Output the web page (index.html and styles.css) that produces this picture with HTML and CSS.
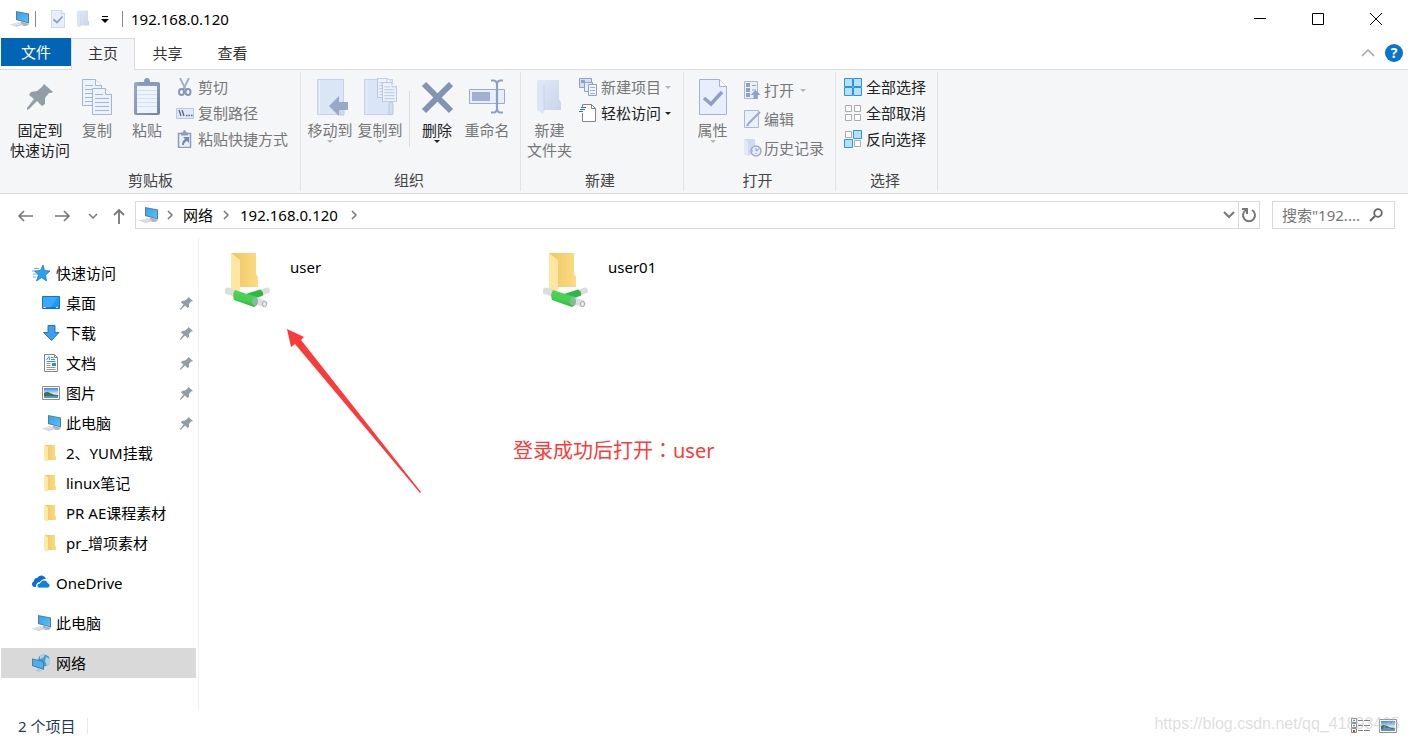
FILE: index.html
```
<!DOCTYPE html>
<html lang="zh-CN">
<head>
    <meta charset="UTF-8">
    <meta name="viewport" content="width=device-width, initial-scale=1.0">
    <title>192.168.0.120</title>
    <link rel="stylesheet" href="styles.css">
</head>
<body>

    <!-- shared icons -->
    <svg class="defs" width="0" height="0">
        <defs>
            <linearGradient id="screen" x1="0" y1="0" x2="1" y2="1">
                <stop offset="0" stop-color="#2ba4ee"/><stop offset="1" stop-color="#5cc0fa"/>
            </linearGradient>
            <linearGradient id="gold" x1="0" y1="0" x2="1" y2="0">
                <stop offset="0" stop-color="#eec661"/><stop offset="1" stop-color="#fbdc83"/>
            </linearGradient>
            <linearGradient id="pale" x1="0" y1="0" x2="1" y2="1">
                <stop offset="0" stop-color="#e0e9f6"/><stop offset="1" stop-color="#c8d5ea"/>
            </linearGradient>
            <linearGradient id="board" x1="0" y1="0" x2="1" y2="1">
                <stop offset="0" stop-color="#9cabc8"/><stop offset="1" stop-color="#7184a8"/>
            </linearGradient>
            <linearGradient id="green" x1="0.300" y1="0" x2="0" y2="1">
                <stop offset="0" stop-color="#4fd553"/><stop offset="0.500" stop-color="#45cf52"/><stop offset="1" stop-color="#1f9b37"/>
            </linearGradient>
            <linearGradient id="sky" x1="0" y1="0" x2="0" y2="1">
                <stop offset="0" stop-color="#3f86d8"/><stop offset="0.6" stop-color="#e4f1fa"/><stop offset="1" stop-color="#bcd9ee"/>
            </linearGradient>
        </defs>
        <symbol id="i-pc" viewBox="0 0 20 18">
            <path d="M6 1l13 2.500v10L6 10z" fill="#5f7a8c"/>
            <path d="M7 2l11 2.200v8L7 9.200z" fill="url(#screen)"/>
            <path d="M11 11.500l5 1.400 3 1.100-2 1.800-3 .2-4-1.500z" fill="#a9b4bd"/>
            <path d="M0 14.500 8 12.300l6 2.200L6.500 17z" fill="#c9ced3"/>
            <path d="M2 14.600l6-1.500M4.500 15.500l6-1.700" stroke="#f7f7f7" stroke-width=".7"/>
        </symbol>
        <symbol id="i-pin" viewBox="0 0 26 26">
            <path d="M17 0l9 8-2 1-2 0-4 5 0 6-3 2-5-5-8 8-2 1 0-2 7-9-5-4 2-3 6-1 5-4z" fill="#929ea5"/>
        </symbol>
        <symbol id="i-folder" viewBox="0 0 12 18">
            <path d="M1 1h10v10.500l1 1V16H3z" fill="url(#gold)"/>
            <path d="M0 1l4 2v13l-1 2-3-2z" fill="#ffe9a9"/>
        </symbol>
        <symbol id="i-share" viewBox="0 0 46 56">
            <path d="M6 1h25v21l2 3v10H14z" fill="url(#gold)"/>
            <path d="M6 1l9 7v30l-2 2-7-3z" fill="#ffe7a3"/>
            <path d="M42 38.500l-7 2.500" stroke="#dcdede" stroke-width="6" stroke-linecap="round" fill="none"/>
            <path d="M3 39l9 3" stroke="#dcdede" stroke-width="7" stroke-linecap="round" fill="none"/>
            <path d="M21 42l14-4.500q4 2 3 6l-12 5z" fill="#2db845"/>
            <path d="M10 38l12 4 10 3q2 4 0 8l-3 2-20-7q-2-6 1-10z" fill="url(#green)"/>
            <path d="M32 49l7 2.500" stroke="#dddfdf" stroke-width="7" stroke-linecap="round" fill="none"/>
            <ellipse cx="30" cy="49.500" rx="3" ry="4" fill="#8ab7a0"/>
            <ellipse cx="39.500" cy="52" rx="2" ry="2.700" fill="#ececec" stroke="#a9acad"/>
        </symbol>
        <symbol id="i-check" viewBox="0 0 28 36">
            <path d="M.5.5h20l7 7v28H.5z" fill="#e6effb" stroke="#a3b3d1"/>
            <path d="M20.500.5v7h7" fill="#f6f9fd" stroke="#a3b3d1"/>
            <path d="M5 19l7 6 11-12" fill="none" stroke="#8e9fc2" stroke-width="3.500"/>
        </symbol>
        <symbol id="i-flat" viewBox="0 0 24 36">
            <path d="M1 1h21v19l2 3v8H6z" fill="url(#pale)"/>
            <path d="M0 1l7 5v26l-1 3-6-4z" fill="#dae5f5"/>
            <path d="M7 6v26" stroke="#c3d0e5" stroke-width=".7"/>
        </symbol>
        <symbol id="i-page" viewBox="0 0 20 27">
            <path d="M.5.5h13l6 6v20H.5z" fill="#edf3fc" stroke="#a3b6d8"/>
            <path d="M13.500.5v6h6" fill="#fff" stroke="#a3b6d8"/>
            <path d="M3 6.500h8M3 10.500h14M3 14.500h14M3 18.500h14M3 22.500h14" stroke="#a3b6d8"/>
        </symbol>
        <symbol id="i-right" viewBox="0 0 8 10">
            <path d="M2 1l4 4-4 4" fill="none" stroke="#777" stroke-width="1.500"/>
        </symbol>
        <symbol id="i-drop" viewBox="0 0 6 3">
            <path d="M0 0h6L3 3z" fill="currentColor"/>
        </symbol>
        <symbol id="i-photo" viewBox="0 0 18 14">
            <path d="M.5.5h17v13H.5z" fill="#fff" stroke="#8a8f94"/>
            <path d="M2 2h14v10H2z" fill="url(#sky)"/>
            <path d="M2 7q3-2 6 0t8 2v1H2z" fill="#3c6e62"/>
            <path d="M2 10h14v2H2z" fill="#5c95b4"/>
        </symbol>
    </svg>

    <header class="titlebar">
        <svg class="app-icon" width="20" height="18"><use href="#i-pc"/></svg>
        <span class="bar"></span>
        <button class="quick" aria-label="属性"><svg width="14" height="18"><use href="#i-check"/></svg></button>
        <button class="quick" aria-label="新建文件夹"><svg width="12" height="18"><use href="#i-flat"/></svg></button>
        <button class="quick more" aria-label="自定义快速访问工具栏">
            <svg width="8" height="7"><path d="M1 .5h6" stroke="#000"/><path d="M0 3h8L4 7z"/></svg>
        </button>
        <span class="bar"></span>
        <h1>192.168.0.120</h1>
        <div class="window-buttons">
            <button aria-label="最小化"><svg width="12" height="12"><path d="M0 5.500h12" stroke="#000"/></svg></button>
            <button aria-label="最大化"><svg width="12" height="12"><path d="M.5.5h11v11H.5z" fill="none" stroke="#000"/></svg></button>
            <button aria-label="关闭"><svg width="12" height="12"><path d="M0 0l12 12M12 0L0 12" stroke="#000"/></svg></button>
        </div>
    </header>

    <nav class="tabs">
        <button class="tab file">文件</button>
        <button class="tab active">主页</button>
        <button class="tab">共享</button>
        <button class="tab">查看</button>
        <button class="collapse" aria-label="折叠功能区"><svg width="14" height="8"><path d="M1 7l6-6 6 6" fill="none" stroke="#a5a5a5" stroke-width="1.500"/></svg></button>
        <button class="help" aria-label="帮助">?</button>
    </nav>

    <section class="ribbon">
        <div class="group clipboard">
            <div class="tools">
                <button class="big pin">
                    <svg width="30" height="40"><use href="#i-pin" x="2" y="6" width="26" height="26"/></svg>
                    固定到<br>快速访问
                </button>
                <button class="big off">
                    <svg width="32" height="40"><use href="#i-page" x="1" y="1" width="20" height="27"/><use href="#i-page" x="11" y="10" width="20" height="27"/></svg>
                    复制
                </button>
                <button class="big off">
                    <svg width="26" height="40">
                        <rect y="4" width="26" height="33" rx="2" fill="url(#board)"/>
                        <path d="M3 8h20v27H3z" fill="#eef4fc"/>
                        <path d="M3 12.500h20M3 16.500h20M3 20.500h20M3 24.500h20M3 28.500h20" stroke="#d3dff0"/>
                        <path d="M5 4h5q0-4 3-4t3 4h5v3H5z" fill="#8799ba"/>
                    </svg>
                    粘贴
                </button>
                <div class="list">
                    <button class="small off">
                        <svg width="18" height="18"><path d="M4 0l6 12M13 0L7 12" stroke="#a3adc0" stroke-width="1.800"/><g fill="none" stroke="#8597b9" stroke-width="2"><ellipse cx="5.500" cy="14" rx="2.500" ry="3"/><ellipse cx="12" cy="14" rx="2.500" ry="3"/></g></svg>
                        剪切
                    </button>
                    <button class="small off">
                        <svg width="18" height="18"><path d="M.5 4.500h17v10H.5z" fill="#dfe9f7" stroke="#b9c7df"/><path d="M3 6l2 6M6 6l2 6M10 11.500h1.500M12.500 11.500H14M15 11.500h1.500" stroke="#51658f" stroke-width="1.300"/></svg>
                        复制路径
                    </button>
                    <button class="small off">
                        <svg width="18" height="18"><path d="M2.500 3.500h12v14h-12z" fill="#e8f0fb" stroke="#8b9cbd" stroke-width="1.500"/><path d="M5 2.500h2Q7 0 8.500 0T10 2.500h2v3H5z" fill="#8b9cbd"/><path d="M7 7h6v6l-2-2q-3 1-3 4H6q0-4 3-6z" fill="#7588ae"/></svg>
                        粘贴快捷方式
                    </button>
                </div>
            </div>
            <h2>剪贴板</h2>
        </div>

        <div class="group organize">
            <div class="tools">
                <button class="big off">
                    <svg width="36" height="40">
                        <path d="M5.500 1.500h26v35h-26z" fill="#dae5f5" stroke="#c5d3e9"/>
                        <path d="M7.500 2v34" stroke="#e8eff9"/>
                        <path d="M29 26q3-5 3 1v10h-4V25z" fill="#d3dff0" stroke="#b8c8e0"/>
                        <path d="M17 28l10-10v6h9v8h-9v6z" fill="#98a9c8"/>
                    </svg>
                    移动到
                    <svg class="drop" width="6" height="3"><use href="#i-drop"/></svg>
                </button>
                <button class="big off">
                    <svg width="34" height="40">
                        <path d="M1.500 1.500h28v35h-28z" fill="#dae5f5" stroke="#c5d3e9"/>
                        <path d="M3.500 2v34" stroke="#e8eff9"/>
                        <path d="M26 26q2-5 4 0v10l-4 1z" fill="#d3dff0" stroke="#b8c8e0"/>
                        <use href="#i-page" x="14" y="0" width="15" height="20"/><use href="#i-page" x="19" y="4" width="15" height="20"/>
                    </svg>
                    复制到
                    <svg class="drop" width="6" height="3"><use href="#i-drop"/></svg>
                </button>
                <span class="split"></span>
                <button class="big">
                    <svg width="32" height="40"><path d="M3 6l27 27M30 6L3 33" stroke="#8293b3" stroke-width="6"/></svg>
                    删除
                    <svg class="drop" width="6" height="3"><use href="#i-drop"/></svg>
                </button>
                <button class="big off">
                    <svg width="36" height="40">
                        <path d="M.5 11.500h35v14H.5z" fill="#e6effb" stroke="#9aabcb"/>
                        <path d="M3 14h18v9H3z" fill="#a0b0ce"/>
                        <path d="M22 2.500h3q2 0 3 3 1-3 3-3h3M28 5v26M22 34.500h3q2 0 3-3 1 3 3 3h3" fill="none" stroke="#8da0c2" stroke-width="2.200"/>
                    </svg>
                    重命名
                </button>
            </div>
            <h2>组织</h2>
        </div>

        <div class="group create">
            <div class="tools">
                <button class="big off">
                    <svg width="26" height="40"><use href="#i-flat" x="0" y="1" width="24" height="36"/></svg>
                    新建<br>文件夹
                </button>
                <div class="list">
                    <button class="small off">
                        <svg width="18" height="18"><path d="M.5.5h12v9H.5z" fill="#d4e0f2" stroke="#8ea1c4"/><path d="M2 2h4v3H2z" fill="#8ea1c4"/><path d="M5.500 4.500h8v9h-8z" fill="#e6eefa" stroke="#8ea1c4"/><path d="M9.500 6.500h8v11h-8z" fill="#f3f7fd" stroke="#8ea1c4"/><path d="M11 9.500h5M11 12.500h5M11 15.500h5" stroke="#9fb0d0"/></svg>
                        新建项目
                        <svg class="drop" width="6" height="3"><use href="#i-drop"/></svg>
                    </button>
                    <button class="small">
                        <svg width="18" height="18"><path d="M3.500 3V.5h9l4 4v13h-13V9" fill="#fff" stroke="#858585"/><path d="M12.500.5v4h4" fill="none" stroke="#858585"/><path d="M2 3.500h5M1 5.500h5M0 7.500h4" stroke="#2277b8"/></svg>
                        轻松访问
                        <svg class="drop" width="6" height="3"><use href="#i-drop"/></svg>
                    </button>
                </div>
            </div>
            <h2>新建</h2>
        </div>

        <div class="group open">
            <div class="tools">
                <button class="big off">
                    <svg width="28" height="40"><use href="#i-check" y="1" width="28" height="36"/></svg>
                    属性
                    <svg class="drop" width="6" height="3"><use href="#i-drop"/></svg>
                </button>
                <div class="list loose">
                    <button class="small off">
                        <svg width="18" height="18"><path d="M.5.5h13v17H.5z" fill="#e8f0fb" stroke="#aab9d4"/><path d="M2 2h4v4H2zM2 7h4v4H2zM2 12h4v4H2z" fill="#8ea1c4"/><path d="M8 4.500h4M8 9h4" stroke="#8ea1c4"/><path d="M11.500 9l5 5h-3v4h-4v-4h-3z" fill="#8ea1c4"/></svg>
                        打开
                        <svg class="drop" width="6" height="3"><use href="#i-drop"/></svg>
                    </button>
                    <button class="small off">
                        <svg width="18" height="18"><path d="M.5.5h14v17H.5z" fill="#e8f0fb" stroke="#aab9d4"/><path d="M16 2L5 13l-2 3" fill="none" stroke="#9aabca" stroke-width="2"/></svg>
                        编辑
                    </button>
                    <button class="small off">
                        <svg width="18" height="18"><path d="M0 0h11v13l-7 4-4-2z" fill="#d0dcee"/><path d="M0 0l4 3v14l-4-2z" fill="#e1eaf7"/><circle cx="12" cy="12" r="5" fill="#e4edf9" stroke="#9dadc9" stroke-width="1.500"/><path d="M12 9v3l3-2M8 12h1M12 14v1" fill="none" stroke="#8799ba"/></svg>
                        历史记录
                    </button>
                </div>
            </div>
            <h2>打开</h2>
        </div>

        <div class="group choose">
            <div class="tools">
                <div class="list">
                    <button class="small">
                        <svg width="18" height="18"><g fill="#b7e0fc" stroke="#2b94e5"><path d="M.5.5h8v8h-8zM9.500.5h8v8h-8zM.5 9.500h8v8h-8zM9.500 9.500h8v8h-8z"/></g></svg>
                        全部选择
                    </button>
                    <button class="small">
                        <svg width="18" height="18"><g fill="#fff" stroke="#ababab"><path d="M1.500 1.500h6v6h-6zM10.500 1.500h6v6h-6zM1.500 10.500h6v6h-6zM10.500 10.500h6v6h-6z"/></g></svg>
                        全部取消
                    </button>
                    <button class="small">
                        <svg width="18" height="18"><path d="M1.500 1.500h6v6h-6zM10.500 10.500h6v6h-6z" fill="#fff" stroke="#ababab"/><path d="M9.500.5h8v8h-8zM.5 9.500h8v8h-8z" fill="#b7e0fc" stroke="#2b94e5"/></svg>
                        反向选择
                    </button>
                </div>
            </div>
            <h2>选择</h2>
        </div>
    </section>

    <div class="address-row">
        <button class="nav" aria-label="后退"><svg width="16" height="12"><path d="M16 6H2M7 1L2 6l5 5" fill="none" stroke="#777" stroke-width="1.600"/></svg></button>
        <button class="nav" aria-label="前进"><svg width="16" height="12"><path d="M0 6h14M9 1l5 5-5 5" fill="none" stroke="#777" stroke-width="1.600"/></svg></button>
        <button class="nav narrow" aria-label="最近浏览的位置"><svg width="10" height="8"><path d="M1 2l4 4 4-4" fill="none" stroke="#777" stroke-width="1.500"/></svg></button>
        <button class="nav narrow" aria-label="上移"><svg width="12" height="16"><path d="M6 16V2M1 7l5-5 5 5" fill="none" stroke="#777" stroke-width="1.800"/></svg></button>
        <div class="address">
            <svg width="20" height="18"><use href="#i-pc"/></svg>
            <svg class="sep" width="8" height="10"><use href="#i-right"/></svg>
            <a href="#">网络</a>
            <svg class="sep" width="8" height="10"><use href="#i-right"/></svg>
            <a href="#">192.168.0.120</a>
            <svg class="sep last" width="8" height="10"><use href="#i-right"/></svg>
            <button class="history" aria-label="以前的位置"><svg width="12" height="8"><path d="M1 1l5 5 5-5" fill="none" stroke="#777" stroke-width="2"/></svg></button>
            <button class="refresh" aria-label="刷新"><svg width="16" height="16"><path d="M11 3a6 6 0 1 1-6 0" fill="none" stroke="#777" stroke-width="2"/><path d="M1 1h6v6H5V3H1z" fill="#777"/></svg></button>
        </div>
        <label class="search">
            <input type="text" placeholder="搜索&quot;192...." aria-label="搜索">
            <svg width="14" height="14"><circle cx="9" cy="5" r="3.800" fill="none" stroke="#666" stroke-width="1.800"/><path d="M6 8l-5 5" stroke="#666" stroke-width="2"/></svg>
        </label>
    </div>

    <main>
        <aside class="sidebar">
            <a href="#" class="root">
                <svg width="18" height="18"><path d="M11 1l1.500 5.500 5.500.5-4.500 4 1 6-5-3.500L4.500 17l2-6-4-4 6-.5z" fill="#2ba0ee" stroke="#1b78c2" stroke-width=".8"/><path d="M2 4.500h5M0 7h3M1 10h4M1 13h3" stroke="#64b7ee"/></svg>
                快速访问
            </a>
            <a href="#">
                <svg width="18" height="18"><path d="M.5 2.500h17v12H.5z" fill="#1c9bf5" stroke="#1676bd"/><path d="M16 3L8 14H1V3z" fill="#37aafa"/><path d="M1 14h16" stroke="#0b5e9f"/><path d="M1.500 13.500h2M14 13.500h2" stroke="#fff"/></svg>
                桌面
                <svg class="tack" width="13" height="13"><use href="#i-pin"/></svg>
            </a>
            <a href="#">
                <svg width="18" height="18"><path d="M6 1.500h7v7h4L9.500 16.500 1.500 8.500H6z" fill="#3f9df0" stroke="#2376c4"/></svg>
                下载
                <svg class="tack" width="13" height="13"><use href="#i-pin"/></svg>
            </a>
            <a href="#">
                <svg width="18" height="18"><path d="M2.500.5h10l3 3v14h-13z" fill="#fff" stroke="#7e8589"/><path d="M12.500.5v3h3" fill="none" stroke="#7e8589"/><path d="M4.500 6L7 2.500 7.500 6M9 3.500h2.500M9 5.500h4M4.500 7.500h9" fill="none" stroke="#279ada"/><path d="M4.500 9.500h4M4.500 11.500h4M4.500 13.500h9M4.500 15.500h9" stroke="#8f979b"/><path d="M10 9h4v3h-4z" fill="#3589c4"/></svg>
                文档
                <svg class="tack" width="13" height="13"><use href="#i-pin"/></svg>
            </a>
            <a href="#">
                <svg width="18" height="18"><use href="#i-photo" y="2" width="18" height="14"/></svg>
                图片
                <svg class="tack" width="13" height="13"><use href="#i-pin"/></svg>
            </a>
            <a href="#">
                <svg class="wide" width="20" height="18"><use href="#i-pc"/></svg>
                此电脑
                <svg class="tack" width="13" height="13"><use href="#i-pin"/></svg>
            </a>
            <a href="#"><svg width="18" height="18"><use href="#i-folder" x="2" width="12" height="18"/></svg>2、YUM挂载</a>
            <a href="#"><svg width="18" height="18"><use href="#i-folder" x="2" width="12" height="18"/></svg>linux笔记</a>
            <a href="#"><svg width="18" height="18"><use href="#i-folder" x="2" width="12" height="18"/></svg>PR AE课程素材</a>
            <a href="#"><svg width="18" height="18"><use href="#i-folder" x="2" width="12" height="18"/></svg>pr_增项素材</a>
            <a href="#" class="root gap">
                <svg width="18" height="18"><path d="M3 13q-3 0-3-3 0-2 2-3 0-3 3-3 2-3 5-2.500 3 .5 4 3.500l-2 0q-3 1-4 3-4 0-4 5z" fill="#0a6fd0"/><path d="M7 14q-2 0-2-2.500T8 9q1-3 4-3t4 3q2 .5 2 2.500T16 14z" fill="#1180e0" stroke="#fff" stroke-width=".8"/></svg>
                OneDrive
            </a>
            <a href="#" class="root gap">
                <svg class="wide" width="20" height="18"><use href="#i-pc"/></svg>
                此电脑
            </a>
            <a href="#" class="root gap selected">
                <svg width="18" height="18"><circle cx="12" cy="6.500" r="6" fill="#4c9cc4"/><path d="M8 2q3-2 5-1.500L11 4 8 5zM14 3l4 2v4l-3 3-2-5z" fill="#a9d5e8"/><path d="M0 4.500l12 2.500v9L0 12z" fill="#4f7f9f"/><path d="M1 5.700l10 2.200v6.600L1 11.300z" fill="#42b2fb"/><path d="M5 14l3 .8v1.200l3 .6-4 1.200-4-1.300 2-.5z" fill="#b9c6cf"/></svg>
                网络
            </a>
        </aside>

        <section class="files">
            <a href="#" class="item"><svg width="46" height="56"><use href="#i-share"/></svg>user</a>
            <a href="#" class="item"><svg width="46" height="56"><use href="#i-share"/></svg>user01</a>

            <!-- tutorial markup drawn over the file area -->
            <svg class="arrow" width="136" height="166"><path d="M1 1l17 8-3 3L135 164l-1 1L9 16l-4 3z" fill="#fb3a3a"/></svg>
            <p class="note">登录成功后打开<span class="colon" lang="zh-TW">：</span>user</p>
        </section>
    </main>

    <footer>
        <span class="count">2 个项目</span>
        <div class="views">
            <button aria-label="详细信息"><svg width="20" height="16"><g fill="#fff" stroke="#8b8b8b"><path d="M.5.5h5v4h-5zM.5 5.500h5v4h-5zM.5 10.500h5v4h-5z"/></g><path d="M2 2h2v1H2zM2 7h2v1H2z" fill="#2776bd"/><path d="M2 12h2v2H2z" fill="#c7431c"/><path d="M7 2.500h5M13 2.500h6M7 7.500h5M13 7.500h6M7 12.500h5M13 12.500h6" stroke="#7c7c7c"/></svg></button>
            <button aria-label="大图标"><svg width="18" height="14"><use href="#i-photo"/></svg></button>
        </div>
        <span class="watermark">https://blog.csdn.net/qq_41893425</span>
    </footer>

</body>
</html>
```
FILE: styles.css
```
* { box-sizing: border-box; }
body {
    margin: 0;
    padding: 0 1px;
    min-height: 100vh;
    display: flex;
    flex-direction: column;
    background: #fff;
    color: #000;
    font: 15px/20px "Noto Sans", "Noto Sans CJK SC", sans-serif;
}
button { border: 0; padding: 0; background: none; font: inherit; color: inherit; }
a { color: inherit; text-decoration: none; }
svg { flex: none; display: block; }
h1, h2, p { margin: 0; font-size: 15px; font-weight: normal; }
.defs { position: absolute; }

/* title bar */
.titlebar { height: 38px; display: flex; align-items: center; padding-left: 9px; }
.titlebar .bar { width: 1px; height: 16px; background: #8a8a8a; margin-left: 5px; }
.quick { margin-left: 12px; }
.bar + .quick { margin-left: 15px; }
.quick.more { margin-right: 8px; }
.titlebar h1 { margin-left: 8px; }
.window-buttons { margin-left: auto; display: flex; padding-right: 2px; }
.window-buttons button { width: 58px; height: 38px; display: flex; align-items: center; justify-content: center; }

/* tabs */
.tabs { height: 31px; display: flex; align-items: flex-start; }
.tab { width: 65px; height: 30px; color: #333; }
.tab.file { width: 70px; height: 28px; background: #0065b4; color: #fff; }
.tab.active {
    width: 64px;
    height: 32px;
    z-index: 1;
    padding-bottom: 3px;
    background: #f4f6f8;
    border: 1px solid #dadbdc;
    border-bottom: 0;
}
.collapse { margin: 11px 10px 0 auto; }
.help {
    width: 18px;
    height: 18px;
    margin: 6px 4px 0 0;
    border-radius: 50%;
    background: #0874d1;
    color: #fff;
    font-size: 14px;
    line-height: 18px;
    font-weight: bold;
}

/* ribbon */
.ribbon {
    display: flex;
    height: 125px;
    margin: 0 -1px;
    padding: 2px 0 2px 1px;
    background: #f4f6f8;
    border-top: 1px solid #dadbdc;
    border-bottom: 1px solid #dadbdc;
}
.group { display: flex; flex-direction: column; justify-content: space-between; border-right: 1px solid #e1e3e5; }
.group h2 { text-align: center; color: #444; padding-bottom: 1px; }
.tools { display: flex; padding-top: 6px; }
.clipboard { width: 300px; padding-left: 7px; }
.clipboard h2 { padding-right: 7px; }
.organize { width: 220px; padding-left: 4px; }
.create { width: 163px; padding-left: 3px; }
.open { width: 152px; padding-left: 3px; }
.organize h2, .create h2, .open h2 { padding-right: 7px; }
.choose { width: 102px; padding-left: 8px; }
.choose h2 { padding-right: 11px; }
.big {
    width: 50px;
    display: flex;
    flex-direction: column;
    align-items: center;
    white-space: nowrap;
    color: #222;
}
.big svg:first-child { margin-bottom: 2px; }
.big.pin { width: 64px; }
.off { color: #777; }
.off .drop { color: #b3b6ba; }
.split { width: 1px; height: 56px; margin: 13px 2px 0 4px; background: #dcdfe2; }
.list { display: flex; flex-direction: column; gap: 6px; margin-top: -1px; }
.list.loose { gap: 9px; margin-top: 2px; }
.clipboard .list { margin-left: 4px; }
.create .list { margin-left: 4px; }
.open .list { margin-left: 6px; }
.create .big, .open .big { width: 51px; }
.small { height: 20px; display: flex; align-items: center; gap: 4px; color: #222; }
.small.off { color: #777; }
.open .small { gap: 2px; }
.open .small .drop { margin-left: 4px; }

/* address row */
.address-row { display: flex; align-items: center; height: 42px; padding-right: 12px; }
.nav { width: 38px; display: flex; justify-content: center; padding-top: 1px; }
.nav:first-child { margin-left: 5px; }
.nav.narrow { width: 26px; }
.nav.narrow:nth-child(3) { margin-left: -2px; }
.address {
    flex: 1;
    height: 28px;
    display: flex;
    align-items: center;
    padding-left: 3px;
    border: 1px solid #d9d9d9;
    margin-left: 3px;
}
.address a { padding-bottom: 1px; }
.sep { margin: 0 10px 0 9px; }
.sep:nth-child(2) { margin: 0 9px 0 7px; }
.sep.last { margin-left: 12px; }
.history { margin-left: auto; margin-right: 3px; }
.refresh { height: 26px; width: 21px; display: flex; align-items: center; justify-content: center; border-left: 1px solid #d9d9d9; }
.search {
    width: 123px;
    height: 28px;
    margin-left: 12px;
    padding: 0 11px 0 9px;
    display: flex;
    align-items: center;
    border: 1px solid #d9d9d9;
}
.search input { flex: 1; min-width: 0; padding: 0; border: 0; outline: 0; font: inherit; }
.search input::placeholder { color: #757575; }

/* main area */
main { flex: 1; display: flex; padding-top: 2px; }
.sidebar { width: 198px; padding: 20px 2px 0 0; border-right: 1px solid #f0f0f0; }
.sidebar a { display: flex; align-items: center; gap: 6px; height: 30px; padding: 0 3px 0 41px; }
.sidebar .root { padding-left: 31px; }
.sidebar .gap { margin-top: 10px; }
.sidebar .selected { background: #d9d9d9; }
.wide { margin-right: -2px; }
.tack { margin-left: auto; }
.files { flex: 1; position: relative; display: flex; align-items: flex-start; padding: 14px 0 0 26px; }
.item { width: 318px; display: flex; gap: 19px; line-height: 30px; }
.arrow { position: absolute; left: 87px; top: 90px; }
.note { position: absolute; left: 314px; top: 198px; font-size: 20px; line-height: 28px; color: #fb3a3a; }
.colon { font-family: "Noto Sans CJK TC", sans-serif; }

/* status bar */
footer { position: relative; height: 31px; display: flex; align-items: center; padding: 0 10px 2px 17px; }
.count { color: #1e395b; padding-right: 12px; border-right: 1px solid #e8e8e8; line-height: 16px; }
.views { margin-left: auto; display: flex; align-items: center; gap: 8px; }
.watermark {
    position: absolute;
    right: 7px;
    top: 3px;
    font: 16px/20px "Liberation Sans", sans-serif;
    color: rgba(190, 190, 190, 0.5);
    pointer-events: none;
}
```
